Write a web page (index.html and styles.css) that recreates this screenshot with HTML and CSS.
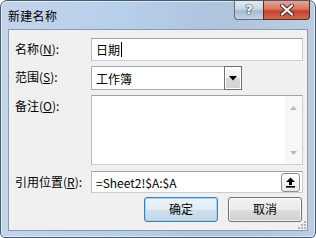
FILE: index.html
```html
<!DOCTYPE html>
<html>
<head>
<meta charset="utf-8">
<link rel="stylesheet" href="styles.css">
</head>
<body>
<div class="window">
  <div class="titlebar">
    <span class="title">新建名称</span>
    <div class="caption">
      <div class="cap-help">?</div>
      <div class="cap-close">
        <svg width="14" height="12" viewBox="0 0 14 12">
          <path d="M2 1.5 L12 10.5 M12 1.5 L2 10.5" stroke="#3a2a2a" stroke-width="4" stroke-linecap="round"/>
          <path d="M2 1.5 L12 10.5 M12 1.5 L2 10.5" stroke="#ffffff" stroke-width="2.2" stroke-linecap="round"/>
        </svg>
      </div>
    </div>
  </div>
  <div class="body">
    <div class="form">
      <div class="label">名称(<u>N</u>):</div>
      <div class="field name">日期<span class="caret"></span></div>

      <div class="label">范围(<u>S</u>):</div>
      <div class="combo">
        <span class="combo-text">工作簿</span>
        <span class="drop">
          <svg width="8" height="5" viewBox="0 0 8 5"><path d="M0 0 H8 L4 4.5 Z" fill="#000"/></svg>
        </span>
      </div>

      <div class="label">备注(<u>O</u>):</div>
      <div class="field memo">
        <div class="scroll">
          <svg width="7" height="4" viewBox="0 0 7 4"><path d="M0 4 L3.5 0 L7 4 Z" fill="#b8b8b8"/></svg>
          <svg width="7" height="4" viewBox="0 0 7 4"><path d="M0 0 L3.5 4 L7 0 Z" fill="#b8b8b8"/></svg>
        </div>
      </div>

      <div class="label ref-label">引用位置(<u>R</u>):</div>
      <div class="field ref">
        <span>=Sheet2!$A:$A</span>
        <span class="collapse">
          <svg width="11" height="11" viewBox="0 0 11 11"><path d="M5.5 0.5 L10 5 H7 V8 H4 V5 H1 Z" fill="#000"/><rect x="1" y="9" width="9" height="1.6" fill="#000"/></svg>
        </span>
      </div>
    </div>
    <div class="actions">
      <div class="btn btn-default">确定</div>
      <div class="btn">取消</div>
    </div>
    <svg class="grip" width="11" height="11" viewBox="0 0 11 11">
      <g fill="#b5b5b5">
        <rect x="8" y="2" width="2" height="2"/>
        <rect x="5" y="5" width="2" height="2"/><rect x="8" y="5" width="2" height="2"/>
        <rect x="2" y="8" width="2" height="2"/><rect x="5" y="8" width="2" height="2"/><rect x="8" y="8" width="2" height="2"/>
      </g>
    </svg>
  </div>
</div>
</body>
</html>
```

FILE: styles.css
```css
* { box-sizing: border-box; }
html, body { margin: 0; padding: 0; background: #ffffff; }
body {
  font-family: "Noto Sans CJK SC", "Noto Sans", sans-serif;
  font-size: 12px;
  color: #000;
}
.window {
  width: 316px;
  height: 238px;
  border: 1px solid #4a5a6e;
  border-radius: 7px 7px 5px 5px;
  background: linear-gradient(90deg, #c2d4ea 0%, #b6cfea 40%, #aec3dc 70%, #bccde2 100%);
  padding: 0 7px 6px 7px;
  display: flex;
  flex-direction: column;
  box-shadow: inset 0 0 0 1px rgba(255,255,255,0.55);
}
.titlebar {
  height: 28px;
  display: flex;
  justify-content: space-between;
  align-items: flex-start;
}
.title {
  padding-top: 6px;
  line-height: 17px;
  font-size: 12px;
  color: #000;
  letter-spacing: 0.3px;
}
.caption {
  display: flex;
  margin-right: -2px;
}
.cap-help {
  width: 29px;
  height: 19px;
  border: 1px solid #5d6d81;
  border-top: none;
  border-right: none;
  border-radius: 0 0 0 4px;
  background: linear-gradient(#e2eaf3 0%, #c8d6e6 45%, #a9bbd0 55%, #c3d3e4 100%);
  color: #fff;
  font-family: "DejaVu Sans", sans-serif;
  font-weight: bold;
  font-size: 13px;
  line-height: 18px;
  text-align: center;
  text-shadow: 0 0 1px #2c3a4c, 0 0 1px #2c3a4c, 0 0 2px #2c3a4c;
}
.cap-close {
  width: 47px;
  height: 19px;
  border: 1px solid #5a2a26;
  border-top: none;
  border-radius: 0 0 4px 0;
  background: linear-gradient(#e8a694 0%, #d9755f 45%, #c4402c 55%, #d06a50 100%);
  display: flex;
  align-items: center;
  justify-content: center;
}
.body {
  flex: 1;
  background: #f0f0f0;
  border: 1px solid #8a9bb1;
  padding: 8px 4px 0 6px;
  position: relative;
}
.form {
  display: grid;
  grid-template-columns: 76px 212px;
  row-gap: 5px;
}
.label {
  line-height: 17px;
  padding-top: 2px;
  white-space: nowrap;
}
.label u { text-decoration-thickness: 1px; text-underline-offset: 1px; }
.ref-label { margin-top: 1px; }
.field {
  background: #fff;
  border: 1px solid #abadb3;
  border-color: #9ea3aa #c9ced5 #c9ced5 #b8bcc3;
  height: 23px;
  padding: 0 4px;
  line-height: 21px;
  display: flex;
  align-items: center;
}
.caret {
  display: inline-block;
  width: 1px;
  height: 15px;
  background: #000;
  margin-left: 1px;
}
.combo {
  width: 151px;
  height: 24px;
  background: #fff;
  border: 1px solid #a5a9b0;
  display: flex;
  align-items: center;
  justify-content: space-between;
  padding-left: 4px;
}
.drop {
  width: 18px;
  height: 24px;
  margin: -1px -1px -1px 0;
  border: 1px solid #6f6f6f;
  background: linear-gradient(#fafafa 0%, #ececec 50%, #dadada 51%, #d2d2d2 100%);
  box-shadow: inset 0 0 0 1px #fff;
  display: flex;
  align-items: center;
  justify-content: center;
}
.memo {
  height: 70px;
  padding: 0;
  justify-content: flex-end;
  align-items: stretch;
}
.scroll {
  width: 17px;
  background: #f7f7f7;
  display: flex;
  flex-direction: column;
  justify-content: space-between;
  align-items: center;
  padding: 10px 0 9px;
}
.ref {
  margin-top: 1px;
  height: 22px;
  justify-content: space-between;
  padding-right: 2px;
}
.collapse {
  width: 19px;
  height: 19px;
  border: 1px solid #8d8d8d;
  border-radius: 3px;
  background: linear-gradient(#ffffff, #e9e9e9);
  display: flex;
  align-items: center;
  justify-content: center;
}
.actions {
  display: flex;
  justify-content: flex-end;
  gap: 10px;
  margin-top: 4px;
  padding-right: 1px;
}
.btn {
  width: 74px;
  height: 25px;
  border: 1px solid #707070;
  border-radius: 3px;
  background: linear-gradient(#f2f2f2 0%, #ebebeb 50%, #dddddd 51%, #cfcfcf 100%);
  box-shadow: inset 0 0 0 1px rgba(255,255,255,0.8);
  text-align: center;
  line-height: 22px;
}
.btn-default {
  border-color: #3c7fb1;
  background: linear-gradient(#eaf4fa 0%, #e1edf5 50%, #cfdfec 51%, #c4d8e8 100%);
  box-shadow: inset 0 0 0 1px #9fd4f3;
}
.grip {
  position: absolute;
  right: 0;
  bottom: 0;
}
```
